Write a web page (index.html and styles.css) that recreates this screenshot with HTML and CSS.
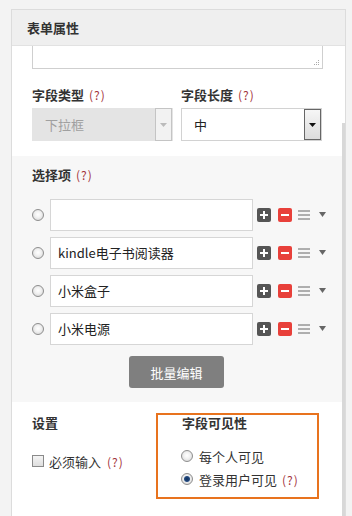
FILE: index.html
```html
<!DOCTYPE html>
<html>
<head>
<meta charset="utf-8">
<link rel="stylesheet" href="styles.css">
</head>
<body>
<div class="panel">
  <div class="panel-head">表单属性</div>

  <div class="sec sec-top">
    <div class="textarea">
      <svg class="grip" width="6" height="6" viewBox="0 0 6 6"><g fill="#aaa"><rect x="4" y="0" width="1" height="1"/><rect x="2" y="2" width="1" height="1"/><rect x="4" y="2" width="1" height="1"/><rect x="0" y="4" width="1" height="1"/><rect x="2" y="4" width="1" height="1"/><rect x="4" y="4" width="1" height="1"/></g></svg>
    </div>
    <div class="cols">
      <div class="col">
        <div class="label">字段类型 <span class="help">(?)</span></div>
        <div class="select disabled">
          <span class="val">下拉框</span>
          <span class="arrow"><svg width="7" height="4" viewBox="0 0 7 4"><path d="M0 0h7L3.5 4z" fill="#bbb"/></svg></span>
        </div>
      </div>
      <div class="col">
        <div class="label">字段长度 <span class="help">(?)</span></div>
        <div class="select">
          <span class="val">中</span>
          <span class="arrow"><svg width="7" height="4" viewBox="0 0 7 4"><path d="M0 0h7L3.5 4z" fill="#111"/></svg></span>
        </div>
      </div>
    </div>
  </div>

  <div class="sec sec-opts">
    <div class="label">选择项 <span class="help">(?)</span></div>
    <div class="rows">
      <div class="row">
        <span class="radio"></span>
        <div class="input"></div>
        <span class="ico plus"><svg width="14" height="14" viewBox="0 0 14 14"><path d="M7 3v8M3 7h8" stroke="#fff" stroke-width="2"/></svg></span>
        <span class="ico minus"><svg width="14" height="14" viewBox="0 0 14 14"><path d="M3 7h8" stroke="#fff" stroke-width="2"/></svg></span>
        <span class="ham"><svg width="12" height="10" viewBox="0 0 12 10"><path d="M0 1h12M0 5h12M0 9h12" stroke="#666" stroke-width="1"/></svg></span>
        <span class="tri"><svg width="7" height="5" viewBox="0 0 7 5"><path d="M0 0h7L3.5 5z" fill="#666"/></svg></span>
      </div>
      <div class="row">
        <span class="radio"></span>
        <div class="input">kindle电子书阅读器</div>
        <span class="ico plus"><svg width="14" height="14" viewBox="0 0 14 14"><path d="M7 3v8M3 7h8" stroke="#fff" stroke-width="2"/></svg></span>
        <span class="ico minus"><svg width="14" height="14" viewBox="0 0 14 14"><path d="M3 7h8" stroke="#fff" stroke-width="2"/></svg></span>
        <span class="ham"><svg width="12" height="10" viewBox="0 0 12 10"><path d="M0 1h12M0 5h12M0 9h12" stroke="#666" stroke-width="1"/></svg></span>
        <span class="tri"><svg width="7" height="5" viewBox="0 0 7 5"><path d="M0 0h7L3.5 5z" fill="#666"/></svg></span>
      </div>
      <div class="row">
        <span class="radio"></span>
        <div class="input">小米盒子</div>
        <span class="ico plus"><svg width="14" height="14" viewBox="0 0 14 14"><path d="M7 3v8M3 7h8" stroke="#fff" stroke-width="2"/></svg></span>
        <span class="ico minus"><svg width="14" height="14" viewBox="0 0 14 14"><path d="M3 7h8" stroke="#fff" stroke-width="2"/></svg></span>
        <span class="ham"><svg width="12" height="10" viewBox="0 0 12 10"><path d="M0 1h12M0 5h12M0 9h12" stroke="#666" stroke-width="1"/></svg></span>
        <span class="tri"><svg width="7" height="5" viewBox="0 0 7 5"><path d="M0 0h7L3.5 5z" fill="#666"/></svg></span>
      </div>
      <div class="row">
        <span class="radio"></span>
        <div class="input">小米电源</div>
        <span class="ico plus"><svg width="14" height="14" viewBox="0 0 14 14"><path d="M7 3v8M3 7h8" stroke="#fff" stroke-width="2"/></svg></span>
        <span class="ico minus"><svg width="14" height="14" viewBox="0 0 14 14"><path d="M3 7h8" stroke="#fff" stroke-width="2"/></svg></span>
        <span class="ham"><svg width="12" height="10" viewBox="0 0 12 10"><path d="M0 1h12M0 5h12M0 9h12" stroke="#666" stroke-width="1"/></svg></span>
        <span class="tri"><svg width="7" height="5" viewBox="0 0 7 5"><path d="M0 0h7L3.5 5z" fill="#666"/></svg></span>
      </div>
    </div>
    <div class="btn-row"><button class="btn">批量编辑</button></div>
  </div>

  <div class="sec sec-set">
    <div class="set-col">
      <div class="label">设置</div>
      <div class="check"><span class="box"></span><span>必须输入</span> <span class="help">(?)</span></div>
    </div>
    <div class="vis-box">
      <div class="label">字段可见性</div>
      <div class="opt first"><span class="radio"></span><span>每个人可见</span></div>
      <div class="opt"><span class="radio on"></span><span>登录用户可见</span> <span class="help">(?)</span></div>
    </div>
  </div>

  <div class="scroll"></div>
</div>
</body>
</html>
```

FILE: styles.css
```css
* { box-sizing: border-box; }
body {
  margin: 0;
  background: #f3f3f3;
  font-family: "Noto Sans CJK SC", "Noto Sans", sans-serif;
  font-size: 13px;
  color: #333;
}
.panel {
  margin: 9px 0 0 11px;
  width: 335px;
  height: 507px;
  border: 1px solid #dcdcdc;
  border-bottom: none;
  background: #fff;
  position: relative;
  overflow: hidden;
}
.panel-head {
  height: 36px;
  background: #efefef;
  border-bottom: 1px solid #e2e2e2;
  padding-left: 15px;
  font-weight: bold;
  font-size: 13px;
  line-height: 36px;
  color: #333;
}
.sec { padding-left: 20px; }
.label {
  font-weight: bold;
  font-size: 13px;
  line-height: 16px;
  color: #333;
}
.help {
  font-weight: normal;
  font-size: 12px;
  color: #a3343c;
  letter-spacing: 1px;
  margin-left: 2px;
}
.sec-top { padding-bottom: 15px; }
.textarea {
  width: 291px;
  height: 23px;
  border: 1px solid #cfcfcf;
  border-top: none;
  position: relative;
  background: #fff;
}
.grip { position: absolute; right: 2px; bottom: 2px; }
.cols { display: flex; gap: 8px; margin-top: 18px; }
.col { width: 141px; }
.select {
  margin-top: 5px;
  height: 33px;
  border: 1px solid #d2d2d2;
  display: flex;
  align-items: center;
  position: relative;
  background: #fff;
}
.select .val { padding-left: 12px; flex: 1; color: #222; font-size: 13px; }
.select .arrow {
  width: 17px;
  height: 31px;
  border: 1px solid #666;
  background: linear-gradient(#f6f6f6, #dcdcdc);
  display: flex;
  align-items: center;
  justify-content: center;
}
.select.disabled { background: #e4e4e4; border-color: #e4e4e4; }
.select.disabled .val { color: #a0a0a0; }
.select.disabled .arrow { border-color: #c4c4c4; background: #f2f2f2; height: 33px; }

.sec-opts {
  background: #f7f7f7;
  padding-top: 11px;
  padding-bottom: 14px;
}
.rows { margin-top: 16px; display: flex; flex-direction: column; gap: 6px; }
.row { display: flex; align-items: center; height: 32px; }
.radio {
  width: 12px;
  height: 12px;
  border-radius: 50%;
  border: 1px solid #8e8e8e;
  background: radial-gradient(circle at 50% 45%, #fff 0, #f2f2f2 40%, #cfcfcf 100%);
  display: inline-block;
  flex: none;
  position: relative;
}
.radio.on::after {
  content: "";
  position: absolute;
  left: 2px; top: 2px;
  width: 6px; height: 6px;
  border-radius: 50%;
  background: radial-gradient(circle, #0f2f5c 0, #23497e 60%, #7aa4d0 100%);
}
.row .radio { margin-right: 6px; }
.input {
  width: 203px;
  height: 32px;
  border: 1px solid #d6d6d6;
  background: #fff;
  padding-left: 7px;
  line-height: 30px;
  font-size: 13px;
  color: #222;
}
.ico {
  width: 14px;
  height: 14px;
  border-radius: 2px;
  display: flex;
  flex: none;
}
.plus { background: #555; margin-left: 4px; }
.minus { background: #e8403a; margin-left: 7px; }
.ham { margin-left: 6px; display: flex; }
.tri { margin-left: 9px; display: flex; margin-top: -2px; }
.btn-row { margin-top: 11px; padding-left: 97px; }
.btn {
  display: block;
  width: 95px;
  height: 32px;
  border: none;
  border-radius: 3px;
  background: #7f7f7f;
  color: #fff;
  font-family: inherit;
  font-size: 13px;
  padding: 0;
}

.sec-set {
  display: flex;
  align-items: flex-start;
  padding-top: 11px;
  background: #fff;
}
.set-col { width: 124px; padding-top: 2px; }
.check {
  display: flex;
  align-items: center;
  height: 20px;
  margin-top: 20px;
  font-size: 13px;
  color: #333;
}
.check .box {
  width: 12px;
  height: 12px;
  border: 1px solid #8a8a8a;
  background: linear-gradient(#f4f4f4, #dedede);
  margin-right: 5px;
  flex: none;
}
.check .help { margin-left: 6px; }
.vis-box {
  width: 163px;
  border: 2px solid #e8731e;
  padding: 0 0 8px 24px;
  margin-left: 0;
}
.opt {
  display: flex;
  align-items: center;
  height: 20px;
  margin-left: -1px;
  margin-top: 3px;
  font-size: 13px;
  color: #333;
}
.opt.first { margin-top: 15px; }
.opt .radio { margin-right: 6px; }
.opt .help { margin-left: 5px; }
.scroll {
  position: absolute;
  right: 0;
  top: 113px;
  bottom: 0;
  width: 3px;
  background: #d8d8d8;
}
```
